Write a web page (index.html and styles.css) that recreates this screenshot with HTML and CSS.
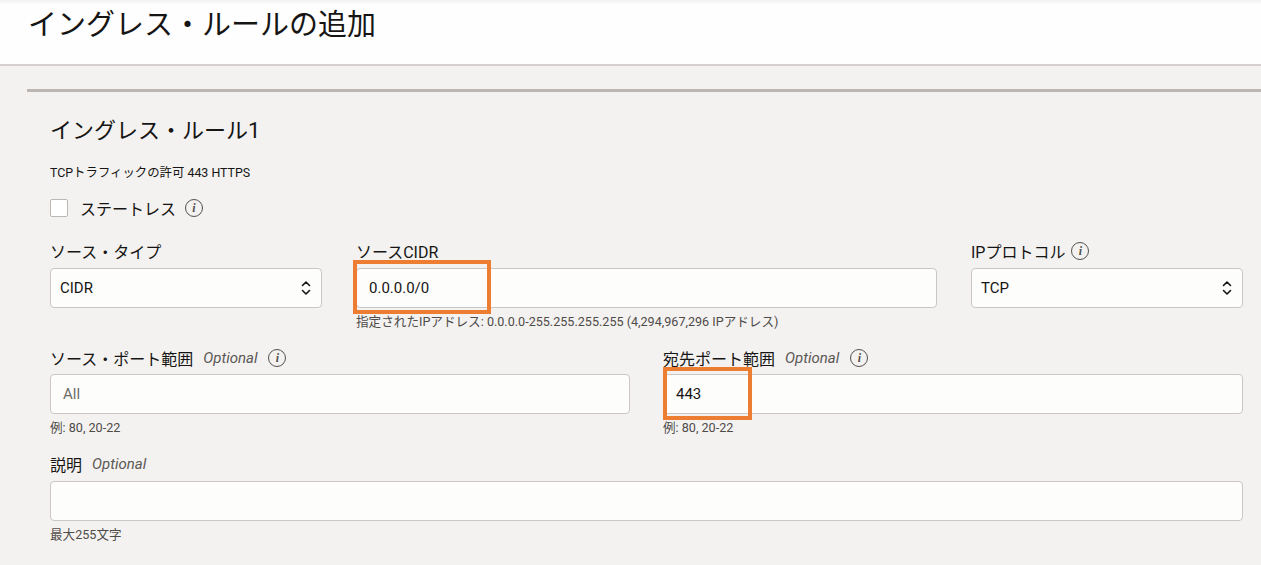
FILE: index.html
```html
<!DOCTYPE html>
<html lang="ja">
<head>
    <meta charset="UTF-8">
    <title>イングレス・ルールの追加</title>
    <link rel="stylesheet" href="styles.css">
</head>
<body>
    <header class="page-header">
        <h1>イングレス・ルールの追加</h1>
    </header>

    <section class="rule-panel">
        <h2 class="rule-title">イングレス・ルール1</h2>
        <p class="rule-desc">TCPトラフィックの許可 443 HTTPS</p>

        <label class="check-row">
            <span class="checkbox"></span>
            <span>ステートレス</span>
            <span class="info-icon">i</span>
        </label>

        <div class="row row-3">
            <div class="field">
                <div class="field-label">ソース・タイプ</div>
                <div class="control select">
                    <span>CIDR</span>
                    <svg class="chevrons" width="10" height="16" viewBox="0 0 10 16"><path d="M1.5 5.5 5 2l3.5 3.5M1.5 10.5 5 14l3.5-3.5" fill="none" stroke="#161513" stroke-width="1.6" stroke-linecap="round" stroke-linejoin="round"/></svg>
                </div>
            </div>
            <div class="field">
                <div class="field-label">ソースCIDR</div>
                <div class="control-wrap">
                    <div class="control"><span>0.0.0.0/0</span></div>
                    <div class="highlight hl-cidr"></div>
                </div>
                <div class="help">指定されたIPアドレス: 0.0.0.0-255.255.255.255 (4,294,967,296 IPアドレス)</div>
            </div>
            <div class="field">
                <div class="field-label">IPプロトコル <span class="info-icon">i</span></div>
                <div class="control select">
                    <span>TCP</span>
                    <svg class="chevrons" width="10" height="16" viewBox="0 0 10 16"><path d="M1.5 5.5 5 2l3.5 3.5M1.5 10.5 5 14l3.5-3.5" fill="none" stroke="#161513" stroke-width="1.6" stroke-linecap="round" stroke-linejoin="round"/></svg>
                </div>
            </div>
        </div>

        <div class="row row-2">
            <div class="field">
                <div class="field-label">ソース・ポート範囲 <em>Optional</em> <span class="info-icon">i</span></div>
                <div class="control"><span class="placeholder">All</span></div>
                <div class="help">例: 80, 20-22</div>
            </div>
            <div class="field">
                <div class="field-label">宛先ポート範囲 <em>Optional</em> <span class="info-icon">i</span></div>
                <div class="control-wrap">
                    <div class="control"><span>443</span></div>
                    <div class="highlight hl-port"></div>
                </div>
                <div class="help">例: 80, 20-22</div>
            </div>
        </div>

        <div class="row">
            <div class="field">
                <div class="field-label">説明 <em>Optional</em></div>
                <div class="control"></div>
                <div class="help">最大255文字</div>
            </div>
        </div>
    </section>
</body>
</html>
```

FILE: styles.css
```css
body {
    margin: 0;
    background: #f3f2f1;
    color: #161513;
    font-family: Roboto, "Noto Sans CJK JP", sans-serif;
}
.page-header {
    height: 64px;
    background: #fefefe;
    border-bottom: 2px solid #d5d0cd;
    box-shadow: inset 0 5px 5px -4px rgba(0,0,0,0.08);
}
.page-header h1 {
    margin: 0;
    padding: 5px 0 0 28px;
    font-size: 29px;
    font-weight: normal;
    line-height: 40px;
}
.rule-panel {
    margin: 23px 0 0 27px;
    border-top: 3px solid #bdb7b3;
    padding: 24px 18px 20px 23px;
}
.rule-title {
    margin: 0;
    font-size: 22px;
    font-weight: normal;
    line-height: 30px;
}
.rule-desc {
    margin: 20px 0 0;
    font-size: 12.4px;
    line-height: 14px;
}
.check-row {
    display: flex;
    align-items: center;
    gap: 12px;
    height: 24px;
    margin-top: 16px;
    font-size: 16px;
}
.checkbox {
    width: 16px;
    height: 16px;
    border: 1px solid #bdb7b3;
    border-radius: 2px;
    background: #fff;
}
.check-row .info-icon {
    margin-left: -3px;
}
.info-icon {
    display: inline-flex;
    align-items: center;
    justify-content: center;
    box-sizing: border-box;
    width: 18px;
    height: 18px;
    border: 1.5px solid #55514e;
    border-radius: 50%;
    font-family: "Liberation Serif", serif;
    font-style: italic;
    font-weight: bold;
    font-size: 12px;
    color: #55514e;
    margin-left: 6px;
}
.field-label em + .info-icon {
    margin-left: 11px;
}
.row {
    display: grid;
    gap: 33px;
    margin-top: 19px;
    align-items: start;
}
.row-3 {
    grid-template-columns: 272px 1fr 272px;
    column-gap: 34px;
    margin-top: 21px;
}
.row-2 {
    grid-template-columns: 1fr 1fr;
}
.field-label {
    display: flex;
    align-items: center;
    height: 20px;
    font-size: 16px;
    margin-bottom: 7px;
    white-space: nowrap;
}
.field-label em {
    font-size: 15px;
    color: #5b5754;
    margin-left: 10px;
}
.row-2 .field-label {
    margin-bottom: 6px;
}
.control-wrap {
    position: relative;
}
.control {
    display: flex;
    align-items: center;
    justify-content: space-between;
    box-sizing: border-box;
    height: 40px;
    padding: 0 12px;
    background: #fdfdfc;
    border: 1px solid #cbc6c3;
    border-radius: 4px;
    font-size: 15px;
}
.select {
    padding: 0 10px 0 9px;
}
.chevrons {
    display: block;
}
.placeholder {
    color: #6f6b68;
}
.help {
    margin-top: 7px;
    font-size: 12.6px;
    line-height: 14px;
    color: #4f4b48;
}
.highlight {
    position: absolute;
    border: 4px solid #ed7d31;
    box-sizing: border-box;
}
.hl-cidr {
    left: -3px;
    top: -8px;
    width: 138px;
    height: 54px;
}
.hl-port {
    left: 0;
    top: -7px;
    width: 89px;
    height: 53px;
}
```
